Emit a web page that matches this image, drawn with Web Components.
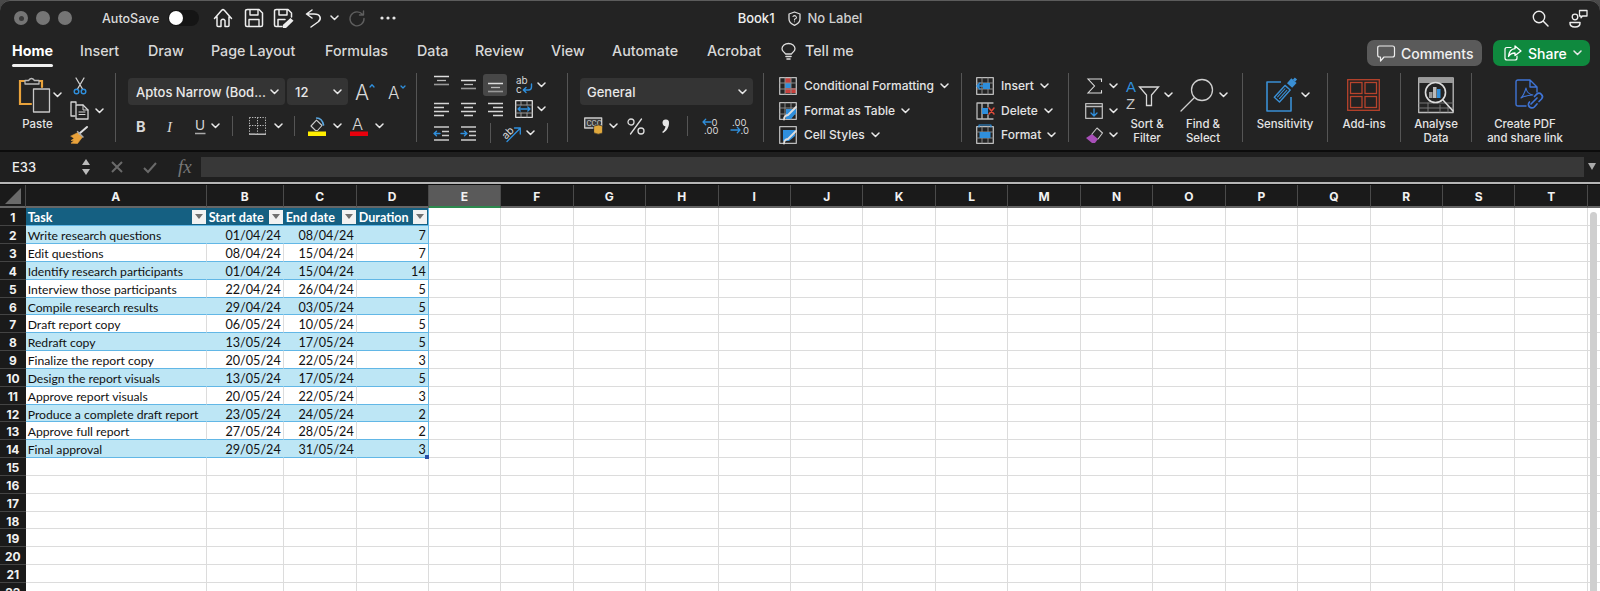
<!DOCTYPE html>
<html lang="en"><head><meta charset="utf-8"><title>Book1</title>
<style>
html,body{margin:0;height:591px;overflow:hidden;background:#4a4a4a}
body{font-family:Inter,"Liberation Sans",sans-serif;color:#e6e6e6}
</style></head><body>
<x-app>
  <x-titlebar></x-titlebar>
  <x-tabs></x-tabs>
  <x-ribbon>
    <x-group w="116" pad="18">
      <x-large icon="paste" chev="1" gap="2" off="-6" style="width:50px" lbl="-11">Paste</x-large>
      <x-stack style="margin-left:2px">
        <x-row><x-icon n="cut" style="margin-left:3px"></x-icon></x-row>
        <x-row><x-icon n="copy"></x-icon><x-chev></x-chev></x-row>
        <x-row><x-icon n="brush"></x-icon></x-row>
      </x-stack>
    </x-group>
    <x-group w="301" pad="12">
      <x-fontpanel></x-fontpanel>
    </x-group>
    <x-group w="151" pad="16">
      <x-alignpanel></x-alignpanel>
    </x-group>
    <x-group w="196" pad="12">
      <x-numberpanel></x-numberpanel>
    </x-group>
    <x-group w="198" pad="15">
      <x-stack>
        <x-row><x-icon n="cf"></x-icon><x-t>Conditional Formatting</x-t><x-chev></x-chev></x-row>
        <x-row><x-icon n="fat"></x-icon><x-t>Format as Table</x-t><x-chev></x-chev></x-row>
        <x-row><x-icon n="cs"></x-icon><x-t>Cell Styles</x-t><x-chev></x-chev></x-row>
      </x-stack>
    </x-group>
    <x-group w="107" pad="14">
      <x-stack>
        <x-row><x-icon n="ins"></x-icon><x-t>Insert</x-t><x-chev></x-chev></x-row>
        <x-row><x-icon n="del"></x-icon><x-t>Delete</x-t><x-chev></x-chev></x-row>
        <x-row><x-icon n="fmt"></x-icon><x-t>Format</x-t><x-chev></x-chev></x-row>
      </x-stack>
    </x-group>
    <x-group w="174" pad="16">
      <x-stack style="width:35px">
        <x-row><x-icon n="sum" style="margin:0 1px 0 2px"></x-icon><x-chev></x-chev></x-row>
        <x-row><x-icon n="fill"></x-icon><x-chev></x-chev></x-row>
        <x-row><x-icon n="eraser"></x-icon><x-chev></x-chev></x-row>
      </x-stack>
      <x-large icon="sort" chev="1" gap="5" off="4" style="width:54px">Sort &amp;<br>Filter</x-large>
      <x-large icon="find" chev="1" gap="6" off="2" style="width:54px;margin-left:2px">Find &amp;<br>Select</x-large>
    </x-group>
    <x-group w="85" pad="0" center="1">
      <x-large icon="sens" chev="1" gap="3" off="6">Sensitivity</x-large>
    </x-group>
    <x-group w="73" pad="0" center="1">
      <x-large icon="addins">Add-ins</x-large>
    </x-group>
    <x-group w="71" pad="0" center="1">
      <x-large icon="analyse">Analyse<br>Data</x-large>
    </x-group>
    <x-group w="128" pad="0" center="1" last="1" style="padding-right:22px">
      <x-large icon="pdf" off="9">Create PDF<br>and share link</x-large>
    </x-group>
  </x-ribbon>
  <x-formula></x-formula>
  <x-sheet></x-sheet>
</x-app>
<script>
const G='#d6d6d6',B='#2f8fdc',D='#8d8d8d';
const svg=(w,h,b)=>`<svg xmlns="http://www.w3.org/2000/svg" width="${w}" height="${h}" viewBox="0 0 ${w} ${h}" fill="none" stroke="${G}" stroke-width="1.3" stroke-linecap="round" stroke-linejoin="round" style="display:block;overflow:visible">${b}</svg>`;
const hl=(a,c=G,sw=1.3)=>`<path stroke="${c}" stroke-width="${sw}" stroke-linecap="butt" d="${a.map(([x1,y,x2])=>`M${x1} ${y}H${x2}`).join('')}"/>`;
const sheetGrid=(w,h)=>{let s=`<rect x=".7" y=".7" width="${w-1.4}" height="${h-1.4}" stroke="#bdbdbd"/>`;for(let i=1;i<3;i++){s+=`<path stroke="#8a8a8a" stroke-width="1" d="M${w*i/3} 1V${h-1}M1 ${h*i/3}H${w-1}"/>`}return s};
const ICONS={
home:svg(20,20,`<path stroke-width="1.5" stroke="#eee" d="M1.5 10.5 8.7 2.2q1.3-1.2 2.6 0l7.2 8.3M4 8.5V17.5q0 1 1 1H8V12.5q2-2.4 4 0V18.5h3q1 0 1-1V8.5"/>`),
save:svg(20,20,`<path stroke-width="1.5" stroke="#eee" d="M3.5 1.5H15L18.5 5V17q0 1.5-1.5 1.5H3q-1.5 0-1.5-1.5V3q0-1.5 2-1.5Z"/><path stroke-width="1.4" stroke="#eee" d="M6 1.8V7H14V1.8M5 18.2V11.5H15V18.2"/>`),
saveas:svg(20,20,`<path stroke-width="1.5" stroke="#eee" d="M9 18.5H3q-1.5 0-1.5-1.5V3q0-1.5 2-1.5H15L18.5 5V9M6 1.8V7H14V1.8M5 18.2V11.5H12"/><path fill="#eee" stroke="none" d="M17.5 10 20.5 12.7 13 20H9.8V17Z"/>`),
undo:svg(16,18,`<path stroke-width="1.5" stroke="#eee" d="M7 1 1.5 5 7 9M1.5 5H9C15.5 5 17 10 13 13L6 18"/>`),
redo:svg(16,16,`<path stroke="#5e5e5e" stroke-width="1.4" d="M13.5 4.5A7 7 0 1 0 15 8.5M14.5 1V5H10.5"/>`),
dots:svg(16,4,`<g fill="#e6e6e6" stroke="none"><circle cx="2" cy="2" r="1.6"/><circle cx="8" cy="2" r="1.6"/><circle cx="14" cy="2" r="1.6"/></g>`),
shield:svg(13,15,`<path stroke="#ddd" d="M6.5 1 12 3V8C12 11 9.5 13 6.5 14.3 3.5 13 1 11 1 8V3Z"/><path stroke="#ddd" stroke-width="1.1" d="M5 5.5Q6.5 3.8 8 5.5T6.5 8.3V9"/><circle cx="6.5" cy="10.8" r=".5" fill="#ddd" stroke="none"/>`),
search:svg(17,17,`<circle cx="7" cy="7" r="5.7" stroke="#eee" stroke-width="1.4"/><path stroke="#eee" stroke-width="1.5" d="M11.3 11.3 16 16"/>`),
people:svg(19,19,`<circle cx="6" cy="8" r="2.8" stroke="#eee"/><path stroke="#eee" stroke-width="1.5" d="M1 13.5H11Q11.3 18 6 18T1 13.5Z"/><path stroke="#eee" d="M10.5 1.5H18V7H13.5L12 8.8V7H10.5Z"/>`),
bulb:svg(15,17,`<path stroke="#ddd" stroke-width="1.3" d="M4.5 11C3.5 9 1 8.5 1 5.7A6.5 5.2 0 0 1 14 5.7C14 8.5 11.5 9 10.5 11Z"/><path stroke="#ddd" stroke-width="1.6" d="M5 13.5H10M6 16H9"/>`),
comment:svg(18,17,`<path stroke="#eee" stroke-width="1.2" d="M2.5 1H15.5Q17.5 1 17.5 3V10Q17.5 12 15.5 12H7L3.5 16V12H2.5Q.7 12 .7 10V3Q.7 1 2.5 1Z"/>`),
share:svg(18,16,`<path stroke="#fff" stroke-width="1.2" d="M7 2.5H3Q1 2.5 1 4.5V13Q1 15 3 15H11Q13 15 13 13V11"/><path stroke="#fff" stroke-width="1.3" d="M11 1 17 6 11 10.5V8C8 8 6 9 4.5 11.5 5 7 7 4 11 3.7Z"/>`),
paste:svg(33,36,`<path stroke="#e9a23b" stroke-width="2.2" stroke-linejoin="miter" d="M8 4H2V27H13M20 4H24V10"/><path stroke="#b9b9b9" stroke-width="1.3" d="M7 7V3.5H10.5Q13.5-.5 16.5 3.5H21V7Z" fill="#232323"/><rect x="15.5" y="12" width="16" height="23" stroke="#c8c8c8" fill="#2a2a2a" stroke-width="1.3"/>`),
cut:svg(14,18,`<path stroke="#cfcfcf" d="M3 1 9.5 12M11 1 4.5 12"/><circle cx="3.5" cy="14.5" r="2.3" stroke="${B}" stroke-width="1.4"/><circle cx="10.5" cy="14.5" r="2.3" stroke="${B}" stroke-width="1.4"/>`),
copy:svg(19,19,`<path d="M6 3V1H1V15H5" stroke-linejoin="round"/><path d="M6 4H13L18 9V18H6Z"/><path stroke-width="1" d="M9 11H15M9 13.5H15M13 4V9H18"/>`),
brush:svg(19,18,`<path fill="#e9a23b" stroke="#e9a23b" stroke-width=".6" d="M1 10 8 6.5 12.5 11 7.5 17.5 1 17.2 4 14.5 1 14.5 4 12.5Z"/><path stroke="#ddd" stroke-width="2" d="M9.5 7.5 17 1"/><path stroke="#aaa" stroke-width="1.5" d="M7.5 5.5 13 11"/>`),
aup:svg(19,18,`<text x="0" y="17" font-family="Inter,Liberation Sans" font-size="21" font-weight="300" fill="#d8d8d8" stroke="none">A</text><path stroke="${B}" d="M15 4 17 1.7 19 4"/>`),
adown:svg(17,16,`<text x="0" y="15" font-family="Inter,Liberation Sans" font-size="17" font-weight="300" fill="#d8d8d8" stroke="none">A</text><path stroke="${B}" d="M13 2 15 4 17 2"/>`),
bold:svg(10,13,`<text x="0" y="12" font-family="Inter,Liberation Sans" font-size="14.5" font-weight="700" fill="#d8d8d8" stroke="none">B</text>`),
ital:svg(8,13,`<text x="0" y="12" font-family="Liberation Serif" font-style="italic" font-size="15" fill="#d8d8d8" stroke="none">I</text>`),
under:svg(11,16,`<text x="0" y="12" font-family="Inter,Liberation Sans" font-size="13.5" fill="#d8d8d8" stroke="none">U</text><path stroke="#aaa" d="M0 15.5H10.5" stroke-linecap="butt"/>`),
border:svg(17,18,`<path stroke-dasharray="1.2 1.4" stroke-linecap="butt" stroke-width="1" stroke="#ccc" d="M.5 .5H16.5V16.5M.5 .5V16.5M8.5 .5V16.5M.5 8.5H16.5"/><path stroke-width="1.2" stroke="#ddd" stroke-linecap="butt" d="M0 17.2H17"/>`),
fillc:svg(18,19,`<path stroke="#ccc" stroke-width="1.1" d="M3 9 8.5 3.2 14 8.5 9.5 13.5H7.5Z"/><path stroke="#5ba6df" stroke-width="1.7" d="M8.7 1Q14 1 15.5 8"/><rect y="14.5" width="18" height="4.5" fill="#ffee00" stroke="none"/>`),
fontc:svg(18,19,`<text x="2" y="13" font-family="Inter,Liberation Sans" font-size="16.5" font-weight="300" fill="#d8d8d8" stroke="none">A</text><rect y="14.5" width="18" height="4.5" fill="#e8000c" stroke="none"/>`),
at:svg(17,12,hl([[1,1.5,16]],'#ddd',1.5)+hl([[4,5.5,13]],'#bbb')+hl([[1,9.5,16]],'#999',1.6)),
am:svg(17,12,hl([[1,1.5,16]],'#ddd',1.5)+hl([[4,5.5,13]],'#bbb')+hl([[1,9.5,16]],'#999',1.6)),
ab:svg(17,12,hl([[1,1.5,16]],'#ddd',1.5)+hl([[4,5.5,13]],'#bbb')+hl([[1,9.5,16]],'#999',1.6)),
al:svg(17,15,hl([[1,1.5,16],[1,5.5,11],[1,9.5,16],[1,13.5,11]])),
ac:svg(17,15,hl([[1,1.5,16],[4,5.5,13],[1,9.5,16],[4,13.5,13]])),
ar:svg(17,15,hl([[1,1.5,16],[6,5.5,16],[1,9.5,16],[6,13.5,16]])),
wrap:svg(18,18,`<text x="1" y="8" font-family="Inter,Liberation Sans" font-size="10" fill="#d8d8d8" stroke="none">ab</text><text x="1" y="17" font-family="Inter,Liberation Sans" font-size="10" fill="#d8d8d8" stroke="none">c</text><path stroke="${B}" stroke-width="1.4" d="M16.5 8V11Q16.5 14 13.5 14H8.5M11 11.5 8.3 14 11 16.5"/>`),
merge:svg(18,18,`<rect x=".7" y=".7" width="16.6" height="16.6" stroke="#ddd"/><path stroke="#999" stroke-width="1" d="M1 5H17M6 1V5M12 1V5M1 13H17M6 13V17M12 13V17"/><path stroke="${B}" stroke-width="1.3" d="M3 9H15M5.2 7 3 9 5.2 11M12.8 7 15 9 12.8 11"/>`),
ind1:svg(17,15,hl([[1,1,16],[9,5.5,16],[9,9.5,16],[1,14,16]],'#ccc')+`<path stroke="${B}" stroke-width="1.4" d="M1 7.5H7M3.5 5.2 1 7.5 3.5 9.8"/>`),
ind2:svg(17,15,hl([[1,1,16],[9,5.5,16],[9,9.5,16],[1,14,16]],'#ccc')+`<path stroke="${B}" stroke-width="1.4" d="M1 7.5H7M4.5 5.2 7 7.5 4.5 9.8"/>`),
orient:svg(18,18,`<text x="0" y="10" transform="rotate(-45 5 8) translate(-2 2)" font-family="Inter,Liberation Sans" font-size="10.5" fill="#d8d8d8" stroke="none">ab</text><path stroke="${B}" stroke-width="1.3" d="M4 17.5 17 4.5M11.5 4H17.3V10"/>`),
cur:svg(19,18,`<rect x=".7" y="1" width="17" height="10" fill="#3a3a3a" stroke="#ccc"/><text x="2.5" y="9" font-family="Inter,Liberation Sans" font-size="7" fill="#ddd" stroke="none">CCC</text><path fill="#e0a83c" stroke="#2a2a2a" stroke-width=".7" d="M10 9Q14.5 6.8 18.5 9V16Q14.5 18.5 10 16Z"/>`),
pct:svg(18,17,`<path stroke-width="1.3" stroke="#ddd" d="M14.5 1 3.5 16"/><circle cx="4" cy="4" r="3" stroke="#ddd"/><circle cx="14" cy="13" r="3" stroke="#ddd"/>`),
comma:svg(8,14,`<path fill="#e6e6e6" stroke="none" d="M1.5 3.5A3.2 3.2 0 1 1 8 4C8 8.5 5.5 12 2 14L1.2 13C3.3 11.5 4.3 9.5 4.5 7.3 3 7.5 1.5 6 1.5 3.5Z"/>`),
decm:svg(18,16,`<text x="9.5" y="7.5" font-family="Inter,Liberation Sans" font-size="9.5" fill="#d8d8d8" stroke="none">0</text><text x="2" y="16" font-family="Inter,Liberation Sans" font-size="9.5" fill="#d8d8d8" stroke="none">.00</text><path stroke="${B}" stroke-width="1.3" d="M1 4H9M3.7 1.3 1 4 3.7 6.7"/>`),
decl:svg(18,16,`<text x="2" y="7.5" font-family="Inter,Liberation Sans" font-size="9.5" fill="#d8d8d8" stroke="none">.00</text><text x="10.5" y="16" font-family="Inter,Liberation Sans" font-size="9.5" fill="#d8d8d8" stroke="none">.0</text><path stroke="${B}" stroke-width="1.3" d="M1 12H10M7.3 9.3 10 12 7.3 14.7"/>`),
cf:svg(18,18,`<rect x="6" y="1" width="6" height="5" fill="#c8403c" stroke="none"/><rect x="6" y="6" width="6" height="5" fill="${B}" stroke="none"/><rect x="6" y="11" width="11" height="5" fill="#c8403c" stroke="none"/>`+sheetGrid(18,18)),
fat:svg(18,18,sheetGrid(18,18)+`<path fill="${B}" stroke="none" d="M7 7H17V11L12 17H7Z"/><path stroke="#ddd" stroke-width="1.8" d="M5 17.5Q5 13.5 9 13L17 5"/>`),
cs:svg(18,18,`<rect x=".7" y=".7" width="16.6" height="16.6" stroke="#bbb"/><path fill="${B}" stroke="none" d="M4 4H16V10L10 15H4Z"/><path stroke="#ddd" stroke-width="1.8" d="M5 17.5Q5 13.5 9 13L17 5"/>`),
ins:svg(18,18,sheetGrid(18,18)+`<rect x="7" y="6" width="7" height="6" fill="${B}" stroke="none"/><path stroke="${B}" stroke-width="1.6" d="M1 9H7M4 6 1 9 4 12"/>`),
del:svg(18,18,`<path stroke="#bbb" d="M1 1H17M1 17H17M1 1V17M12 1V5M12 13V17M6 1V17"/><rect x="6" y="6" width="6" height="6" fill="${B}" stroke="none"/><path stroke="#e04a3a" stroke-width="1.5" d="M13 6 18 12M18 6 13 12"/>`),
fmt:svg(18,18,sheetGrid(18,18)+`<rect x="3.5" y="6" width="11" height="6" fill="${B}" stroke="none"/><path stroke="${B}" stroke-width="1.2" d="M3 1V-1H15V1"/>`),
sum:svg(15,16,`<path stroke="#ddd" stroke-width="1.1" stroke-linejoin="miter" d="M14.5 3.5V1H1L7.5 8 1 15H14.5V12.5"/>`),
fill:svg(18,16,`<rect x=".7" y=".7" width="16.6" height="14.6" stroke="#bbb"/><path stroke="#bbb" d="M1 3.5H17"/><path stroke="${B}" stroke-width="1.3" d="M9 6V12.5M6 10 9 13 12 10"/>`),
eraser:svg(18,17,`<path fill="#a84fb8" stroke="none" d="M1 11 7 16H10L13 12 7 7Z"/><path stroke="#c8c8c8" stroke-width="1.1" d="M7 7 12 1 17.5 6 13 12"/>`),
sort:svg(33,31,`<text x="0" y="12" font-family="Liberation Sans" font-size="15" fill="${B}" stroke="none">A</text><text x="0" y="29" font-family="Liberation Sans" font-size="15" fill="#c8c8c8" stroke="none">Z</text><path stroke="#d8d8d8" stroke-linejoin="miter" d="M13.5 7H32.5L25.5 15V25.5H20.5V15Z"/>`),
find:svg(33,33,`<circle cx="22" cy="11" r="10.5" stroke="#cfcfcf"/><path stroke="#cfcfcf" stroke-width="1.3" d="M14.5 18.5 1 32"/>`),
sens:svg(32,33,`<path stroke="#3a8fd4" stroke-width="1.6" stroke-linecap="butt" d="M15 3H1V32H25V18"/><g transform="rotate(42 20 12)"><rect x="14" y="5" width="10" height="21" fill="#232323" stroke="none"/><rect x="15.5" y="8.5" width="7" height="16" stroke="#3a8fd4" stroke-width="1.4"/><path stroke="#3a8fd4" stroke-width="1" d="M17.7 11V22M20.2 11V22"/><rect x="15.5" y="-1" width="7" height="6.5" fill="#3a8fd4" stroke="none"/><rect x="17.5" y="-4" width="3" height="3" fill="#3a8fd4" stroke="none"/></g>`),
addins:svg(33,32,`<g stroke="#b8432c" stroke-width="1.3" stroke-linejoin="miter"><rect x=".7" y=".7" width="31.6" height="30.6"/><rect x="3.5" y="3.5" width="11.5" height="11"/><rect x="18" y="3.5" width="11.5" height="11"/><rect x="3.5" y="17.5" width="11.5" height="11"/><rect x="18" y="17.5" width="11.5" height="11"/></g>`),
analyse:svg(36,37,`<rect x=".7" y="1" width="34.5" height="34.5" stroke="#bdbdbd"/><rect x=".7" y="1" width="34.5" height="5" fill="#9a9a9a" stroke="none"/><path stroke="#777" stroke-width="1" d="M1 26H35M1 31H35M10 26V35M22 28V35M30 28V35"/><circle cx="17.5" cy="15.5" r="10" fill="#232323" stroke="#ddd" stroke-width="1.6"/><rect x="11" y="15" width="3.5" height="6" fill="#999" stroke="none"/><rect x="15" y="10" width="3.5" height="11" fill="#bbb" stroke="none"/><rect x="19" y="12" width="3.5" height="9" fill="${B}" stroke="none"/><path stroke="#ddd" stroke-width="1.5" d="M25 23 35 34"/>`),
pdf:svg(29,32,`<path stroke="#3f74d6" stroke-width="1.4" d="M3 1H15L22 8V13M15 1V8H22M11 27H3Q1 27 1 25V3Q1 1 3 1"/><path stroke="#3f74d6" stroke-width="1.1" d="M6 19Q9 16 11 9 12 15 18 16 11 16 6 19Z"/><path stroke="#3f74d6" stroke-width="1.7" d="M16 25 22 19M14.5 23A3.4 3.4 0 0 0 19.3 28L22 25M24 22.5 26.5 20A3.4 3.4 0 0 0 21.7 15.2L19.5 17.5"/>`)
};
const base=(name,css,render)=>customElements.define(name,class extends HTMLElement{
  connectedCallback(){ if(this.shadowRoot) return; this.attachShadow({mode:'open'}).innerHTML=`<style>${css}</style>`+render(this); }
});
base('x-icon',':host{display:block;flex:none}',e=>ICONS[e.getAttribute('n')]||'');
base('x-chev',':host{display:block;flex:none;width:9px;height:6px}',()=>`<svg width="9" height="6" viewBox="0 0 9 6" fill="none" stroke="#e8e8e8" stroke-width="1.5" stroke-linecap="round" stroke-linejoin="round" style="display:block"><path d="M1 1 4.5 4.5 8 1"/></svg>`);
base('x-t',':host{display:block;font:500 12px/16px Inter,"Liberation Sans",sans-serif;color:#e4e4e4;white-space:nowrap}',()=>`<slot></slot>`);
base('x-app',':host{display:flex;flex-direction:column;width:1600px;height:591px;overflow:hidden;background:#232323;border-radius:10px 10px 0 0;box-shadow:inset 0 1px 0 #5c5c5c}',()=>`<slot></slot>`);
base('x-titlebar',`:host{display:grid;grid-template-columns:1fr auto 1fr;align-items:center;height:36px;flex:none;font:500 12.5px Inter,"Liberation Sans",sans-serif;color:#dcdcdc}
.l,.c,.r{display:flex;align-items:center}.l{padding-left:14px}.r{justify-content:flex-end;padding-right:12px}
.lt{width:14px;height:14px;border-radius:50%;background:#757575;margin-right:8px;display:flex;align-items:center;justify-content:center}
.lt i{width:5px;height:5px;border-radius:50%;background:#3a3a3a}
.tg{width:31px;height:16px;border-radius:8px;background:#151515;margin:0 14px 0 11px;display:flex;align-items:center;padding-left:1px;box-sizing:border-box}
.tg i{width:14px;height:14px;border-radius:50%;background:#fff}`,()=>`
<div class="l"><span class="lt"><i></i></span><span class="lt"></span><span class="lt" style="margin-right:0"></span>
<span style="margin-left:30px;width:55px">AutoSave</span><span class="tg"><i></i></span>
<x-icon n="home"></x-icon><x-icon n="save" style="margin-left:11px"></x-icon><x-icon n="saveas" style="margin-left:9px"></x-icon><x-icon n="undo" style="margin-left:12px"></x-icon><x-chev style="margin-left:9px"></x-chev><x-icon n="redo" style="margin-left:10px"></x-icon><x-icon n="dots" style="margin-left:15px"></x-icon></div>
<div class="c"><span style="font-size:13px;color:#eee">Book1</span><x-icon n="shield" style="margin:0 7px 0 13px"></x-icon><span style="font-size:13px;color:#d0d0d0">No Label</span></div>
<div class="r"><x-icon n="search"></x-icon><x-icon n="people" style="margin-left:20px"></x-icon></div>`);
base('x-tabs',`:host{display:flex;align-items:center;height:34px;flex:none;padding-left:12px;font:500 14.3px Inter,"Liberation Sans",sans-serif;color:#d8d8d8}
.t{flex:none;line-height:26px;padding-bottom:4px;position:relative}.on{color:#fff;font-weight:700}
.on::after{content:"";position:absolute;left:0;right:0;bottom:1.5px;height:2.5px;background:#f0f0f0;border-radius:2px}
.btn{height:26px;border-radius:7px;display:flex;align-items:center;box-sizing:border-box;flex:none;color:#f0f0f0;font-size:14px}`,()=>{
 const T=[['Home',68],['Insert',68],['Draw',63],['Page Layout',114],['Formulas',92],['Data',58],['Review',76],['View',61],['Automate',95],['Acrobat',74]];
 return T.map(([s,w],i)=>i==0?`<span style="width:${w}px;flex:none;display:flex"><span class="t on">${s}</span></span>`:`<span class="t" style="width:${w}px">${s}</span>`).join('')+
 `<x-icon n="bulb" style="margin-bottom:4px"></x-icon><span class="t" style="margin-left:9px">Tell me</span><span style="flex:1"></span>
 <span class="btn" style="width:115px;background:#5a5a5a;padding-left:10px"><x-icon n="comment"></x-icon><span style="margin-left:6px">Comments</span></span>
 <span class="btn" style="width:97px;background:#0f893e;margin:0 10px 0 11px;padding-left:11px;color:#fff"><x-icon n="share"></x-icon><span style="margin-left:6px">Share</span><x-chev style="margin-left:6px"></x-chev></span>`});
base('x-ribbon',':host{display:flex;height:80px;flex:none;box-sizing:border-box;padding-top:3px}',()=>`<slot></slot>`);
customElements.define('x-group',class extends HTMLElement{connectedCallback(){if(this.shadowRoot)return;const w=this.getAttribute('w'),p=this.getAttribute('pad'),c=this.hasAttribute('center'),l=this.hasAttribute('last');
 this.attachShadow({mode:'open'}).innerHTML=`<style>:host{display:flex;flex:none;box-sizing:border-box;height:69px;width:${w}px;padding-left:${p}px;${l?'':'border-right:1px solid #555;'}${c?'justify-content:center;':''}}</style><slot></slot>`}});
base('x-stack',':host{display:grid;grid-auto-rows:24.5px;align-items:center;flex:none;align-content:start;padding-top:1px}',()=>`<slot></slot>`);
base('x-row',':host{display:flex;align-items:center;gap:7px}::slotted(x-chev){margin-left:-1px}',()=>`<slot></slot>`);
customElements.define('x-large',class extends HTMLElement{connectedCallback(){if(this.shadowRoot)return;const ic=this.getAttribute('icon'),ch=this.hasAttribute('chev'),g=this.getAttribute('gap')||0,lb=this.getAttribute('lbl')||0,off=this.getAttribute('off')||0;
 this.attachShadow({mode:'open'}).innerHTML=`<style>:host{display:flex;flex-direction:column;align-items:center;flex:none}
 .top{height:43.5px;display:flex;align-items:center;flex:none;padding-top:1px;box-sizing:border-box;margin-left:${off}px}.lb{font:500 11.4px/14px Inter,"Liberation Sans",sans-serif;color:#e4e4e4;text-align:center;white-space:nowrap;margin-left:${lb}px}</style>
 <div class="top"><x-icon n="${ic}"></x-icon>${ch?`<x-chev style="margin-left:${g}px"></x-chev>`:''}</div><div class="lb"><slot></slot></div>`}});
const selStyle=`.sel{height:27px;border-radius:4px;background:#343434;box-sizing:border-box;display:flex;align-items:center;padding:0 6px 0 8px;font:500 13px Inter,"Liberation Sans",sans-serif;color:#e8e8e8;justify-content:space-between;flex:none;white-space:nowrap}.sep{width:1px;height:20px;background:#555;flex:none}`;
base('x-fontpanel',`:host{display:grid;grid-template-rows:27px 30px;row-gap:6px;padding-top:5px;flex:none;align-content:start}${selStyle}
.r{display:flex;align-items:center}`,()=>`
<div class="r"><span class="sel" style="width:157px">Aptos Narrow (Bod...<x-chev></x-chev></span><span class="sel" style="width:61px;margin-left:2px">12<x-chev></x-chev></span><x-icon n="aup" style="margin-left:7px"></x-icon><x-icon n="adown" style="margin-left:14px"></x-icon></div>
<div class="r" style="padding-left:8px"><x-icon n="bold"></x-icon><x-icon n="ital" style="margin-left:21px"></x-icon><x-icon n="under" style="margin-left:20px"></x-icon><x-chev style="margin-left:5px"></x-chev><span class="sep" style="margin-left:12px"></span><x-icon n="border" style="margin-left:16px"></x-icon><x-chev style="margin-left:8px"></x-chev><span class="sep" style="margin-left:11px"></span><x-icon n="fillc" style="margin-left:13px"></x-icon><x-chev style="margin-left:7px"></x-chev><x-icon n="fontc" style="margin-left:8px"></x-icon><x-chev style="margin-left:7px"></x-chev></div>`);
base('x-alignpanel',`:host{display:grid;grid-auto-rows:24px;padding-top:0;flex:none;align-content:start}
.r{display:grid;grid-template-columns:27px 27px 28px 22px 1fr;align-items:center;justify-items:start}
.hv{width:24px;height:22px;background:#474747;border-radius:3px;display:flex;align-items:center;justify-content:center;margin-left:-4px}
.sep{width:1px;height:20px;background:#555}`,()=>`
<div class="r"><x-icon n="at" style="margin-bottom:8px"></x-icon><x-icon n="am"></x-icon><span class="hv"><x-icon n="ab" style="margin-top:6px"></x-icon></span><x-icon n="wrap"></x-icon><x-chev></x-chev></div>
<div class="r"><x-icon n="al"></x-icon><x-icon n="ac"></x-icon><x-icon n="ar"></x-icon><x-icon n="merge"></x-icon><x-chev></x-chev></div>
<div class="r" style="grid-template-columns:27px 30px 13px 23px 21px 1fr"><x-icon n="ind1"></x-icon><x-icon n="ind2"></x-icon><span class="sep"></span><x-icon n="orient"></x-icon><x-chev></x-chev><span class="sep"></span></div>`);
base('x-numberpanel',`:host{display:grid;grid-template-rows:27px 30px;row-gap:6px;padding-top:5px;flex:none;align-content:start}${selStyle}.r{display:flex;align-items:center}`,()=>`
<span class="sel" style="width:173px;padding-left:7px">General<x-chev></x-chev></span>
<div class="r" style="padding-left:4px"><x-icon n="cur"></x-icon><x-chev style="margin-left:6px"></x-chev><x-icon n="pct" style="margin-left:9px"></x-icon><x-icon n="comma" style="margin-left:16px"></x-icon><span class="sep" style="margin-left:18px"></span><x-icon n="decm" style="margin-left:14px"></x-icon><x-icon n="decl" style="margin-left:10px"></x-icon></div>`);
base('x-formula',`:host{display:flex;align-items:center;height:34px;flex:none;box-sizing:border-box;background:#1f1f1f;border-top:2px solid #0c0c0c;border-bottom:2px solid #b5b5b5;font:500 13px Inter,"Liberation Sans",sans-serif;color:#eee}
.nb{width:95px;padding-left:12px;box-sizing:border-box;display:flex;justify-content:space-between;align-items:center;padding-right:5px}
.st{display:flex;flex-direction:column;gap:4px}
.st i{display:block;width:0;height:0;border-left:4px solid transparent;border-right:4px solid transparent}
.fx{font:italic 19px "Liberation Serif",serif;color:#777}
.in{flex:1;height:20px;background:#383838;margin-left:9px}`,()=>`
<div class="nb"><span>E33</span><span class="st"><i style="border-bottom:6px solid #bbb"></i><i style="border-top:6px solid #bbb"></i></span></div>
<svg width="70" height="16" viewBox="0 0 70 16" fill="none" stroke="#6a6a6a" stroke-width="2" style="flex:none"><path d="M17 3 27 13M27 3 17 13M49 9 53 13 61 4"/></svg>
<span class="fx" style="margin-left:13px">fx</span><span class="in"></span>
<svg width="16" height="8" viewBox="0 0 16 8" style="flex:none"><path d="M4 0H12L8 7Z" fill="#aaa"/></svg>`);
const DATA=[['Write research questions','01/04/24','08/04/24',7],['Edit questions','08/04/24','15/04/24',7],['Identify research participants','01/04/24','15/04/24',14],['Interview those participants','22/04/24','26/04/24',5],['Compile research results','29/04/24','03/05/24',5],['Draft report copy','06/05/24','10/05/24',5],['Redraft copy','13/05/24','17/05/24',5],['Finalize the report copy','20/05/24','22/05/24',3],['Design the report visuals','13/05/24','17/05/24',5],['Approve report visuals','20/05/24','22/05/24',3],['Produce a complete draft report','23/05/24','24/05/24',2],['Approve full report','27/05/24','28/05/24',2],['Final approval','29/05/24','31/05/24',3]];
base('x-sheet',`:host{display:grid;position:relative;flex:none;width:1600px;background:#fff;border-top:1px solid #0c0c0c;grid-template-columns:25.7px 181px 77px 73px 72px repeat(16,72.46px) 1fr;grid-template-rows:23.3px repeat(22,17.85px);font:12px/17px Lato,"Liberation Sans",sans-serif;color:#111}
div{box-sizing:border-box;white-space:nowrap;overflow:hidden}
.ch{background:#1a1a1a;color:#f2f2f2;font:700 12px/20px Inter,"Liberation Sans",sans-serif;text-align:center;border-right:1px solid #4a4a4a;border-bottom:2px solid #666;padding-top:2px}
.ch.sel{background:#5a5a5a;border-bottom-color:#2d8a4e}
.corner{background:#1a1a1a;border-right:1px solid #4a4a4a;border-bottom:2px solid #666;position:relative}
.corner svg{display:block;margin:3px 0 0 4px}
.rh{background:#1a1a1a;color:#f2f2f2;font:700 12px/16px Inter,"Liberation Sans",sans-serif;text-align:center;border-bottom:1px solid #444;padding-top:2px}
.c{border-right:1px solid #dcdcdc;border-bottom:1px solid #dcdcdc;padding:2px 2px 0;line-height:16px;font-size:12.2px;background:#fff}
.c.num{text-align:right;padding-right:2px;font-size:12.6px}
.band{background:#bde6f5;border-right-color:#bde6f5}
.tb{border-bottom-color:#62b7e6}
.tr{border-right-color:#62b7e6}
.hd{background:#156082;color:#fff;font-weight:700;font-size:12.6px;border-right:0;border-bottom-color:#62b7e6;display:flex;align-items:center;justify-content:space-between;padding:0 1px 0 2px}
.hd span{padding-top:2px}
.hd.tr{border-right:1px solid #62b7e6}
.hd i{display:flex;align-items:center;justify-content:center;width:14px;height:14px;background:#f2f2f2;flex:none}
.hd i::after{content:"";border-left:4.5px solid transparent;border-right:4.5px solid transparent;border-top:5px solid #707070}
.hnd{position:absolute;left:425px;top:270px;width:4px;height:4px;background:#2a4fa8}
.sb{position:absolute;left:1590px;top:27px;width:7px;height:400px;background:#cfcfcf;border-radius:4px}
.rs{background:#fff;border-bottom:1px solid #dcdcdc}
.hr{background:#1a1a1a;border-bottom:2px solid #666}`,()=>{
 const L='ABCDEFGHIJKLMNOPQRST'.split('');
 let h=`<div class="corner"><svg width="18" height="17" viewBox="0 0 18 17"><path d="M17 0V16H1Z" fill="#6a6a6a"/></svg></div>`;
 L.forEach((c,i)=>h+=`<div class="ch${c=='E'?' sel':''}">${c}</div>`);
 h+=`<div class="hr"></div>`;
 for(let r=1;r<=22;r++){
  h+=`<div class="rh">${r}</div>`;
  L.forEach((c,i)=>{
   let cls='c',txt='';
   if(r==1&&i<4){cls='c hd'+(i==3?' tr':'');txt=`<span>${['Task','Start date','End date','Duration'][i]}</span><i></i>`}
   else if(r>=2&&r<=14&&i<4){
    if(r%2==0)cls+=' band';cls+=' tb';if(i==3)cls+=' tr';if(i>0)cls+=' num';txt=DATA[r-2][i];
   }
   h+=`<div class="${cls}">${txt}</div>`;
  });
  h+=`<div class="rs"></div>`;
 }
 return h+`<span class="hnd"></span><span class="sb"></span>`;
});
</script>
</body></html>
